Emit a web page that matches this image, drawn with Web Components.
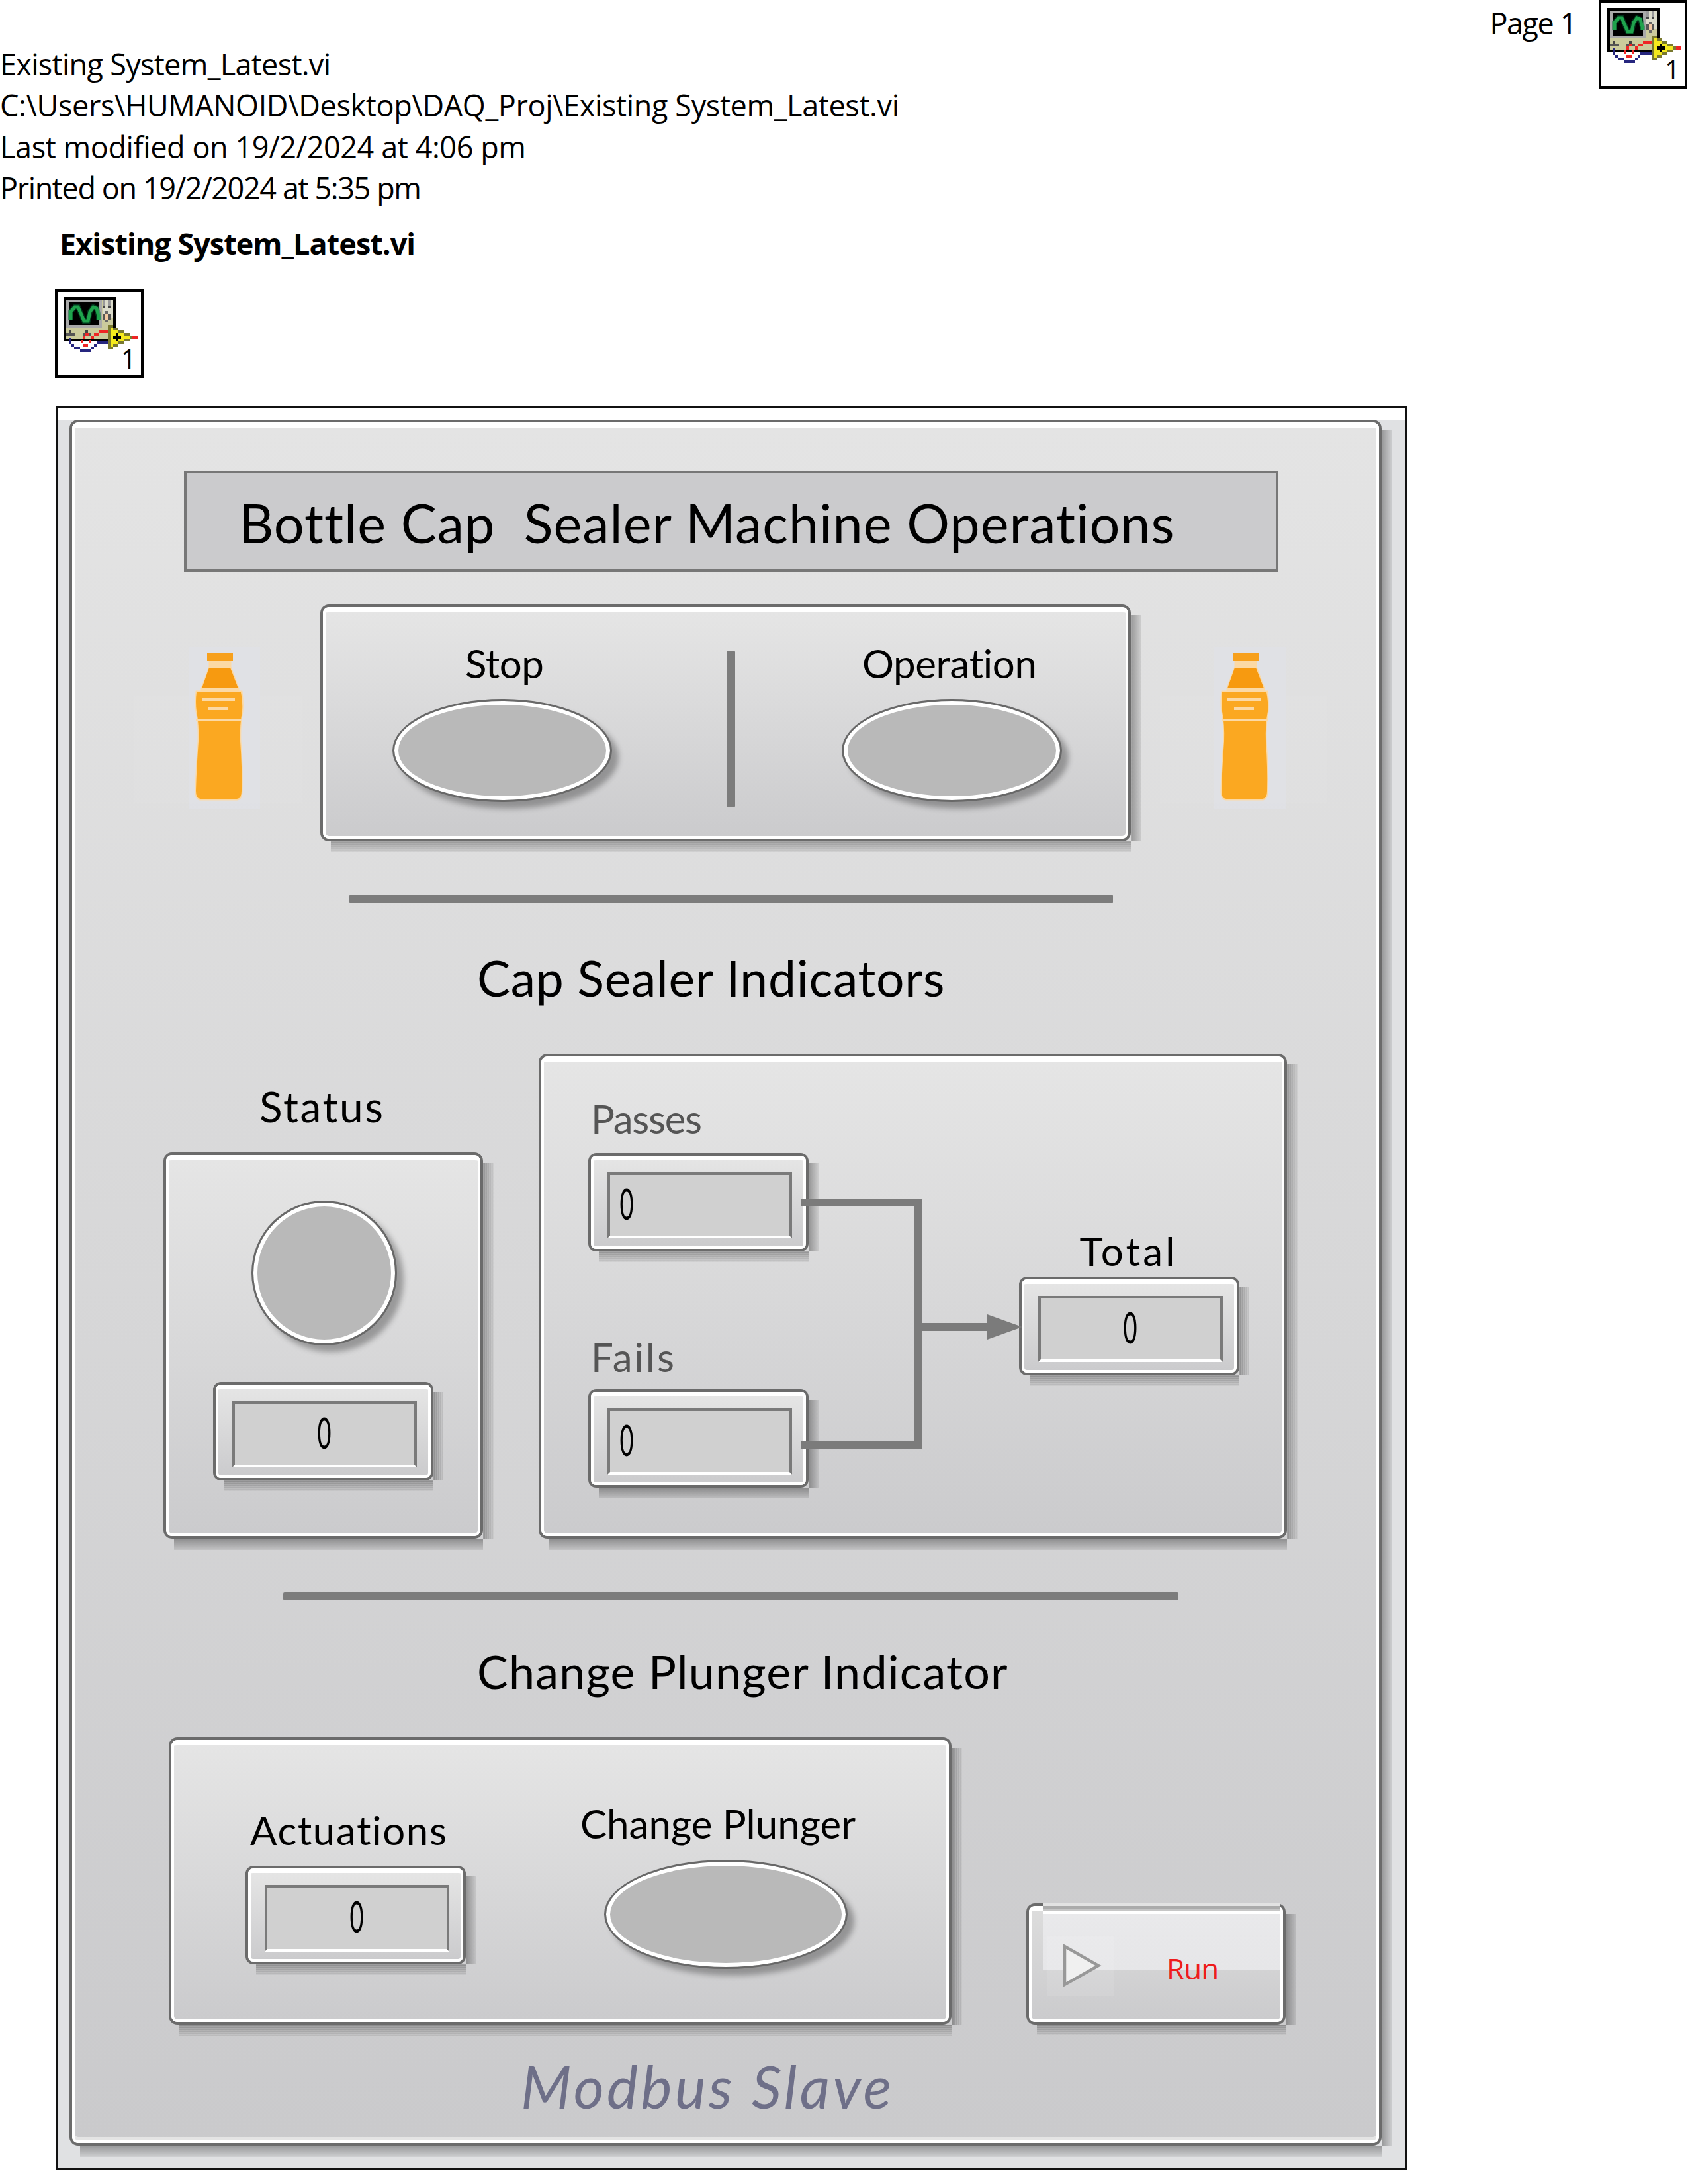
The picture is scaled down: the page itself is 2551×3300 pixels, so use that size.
<!DOCTYPE html>
<html><head><meta charset="utf-8"><title>Existing System_Latest.vi</title>
<style>
html,body{margin:0;padding:0;background:#fff}
body{width:2551px;height:3300px;overflow:hidden;font-family:"Open Sans","Noto Sans",sans-serif;color:#000}
</style></head><body>
<vi-head>
  <fit-text slot="lines" f="o" s="45" w="500">Existing System_Latest.vi</fit-text>
  <fit-text slot="lines" f="o" s="45" w="1359">C:\Users\HUMANOID\Desktop\DAQ_Proj\Existing System_Latest.vi</fit-text>
  <fit-text slot="lines" f="o" s="45" w="795">Last modified on 19/2/2024 at 4:06 pm</fit-text>
  <fit-text slot="lines" f="o" s="45" w="637">Printed on 19/2/2024 at 5:35 pm</fit-text>
  <fit-text slot="page" f="o" s="45" w="132">Page 1</fit-text>
</vi-head>
<fit-text f="o" s="45" wt="700" w="538" style="margin:21.5px 0 0 90px;line-height:62.4px">Existing System_Latest.vi</fit-text>
<vi-icon style="margin:37.5px 0 0 83px"></vi-icon>

<vi-frame>
  <lv-box foot wt="8" style="height:2608px;width:1983px">
    <lv-title style="margin:65px 0 0 165px">
      <fit-text s="81" w="1414" style="margin:34px 0 0 79px">Bottle Cap  Sealer Machine Operations</fit-text>
    </lv-title>

    <lv-row style="margin-top:49.5px">
      <lv-bottle style="margin:57px 0 0 160px"></lv-bottle>
      <lv-box style="margin-left:77px;width:1225px;height:357.5px">
        <lv-row style="padding-left:101px">
          <lv-col style="width:332px">
            <fit-text s="60" w="119" style="margin:47.3px 0 0 110px">Stop</fit-text>
            <lv-lamp style="margin-top:23.7px;width:332px;height:156px"></lv-lamp>
          </lv-col>
          <lv-rule style="margin:57.5px 0 0 173px;width:13px;height:237px"></lv-rule>
          <lv-col style="width:333px;margin-left:161px">
            <fit-text s="60" w="265" style="margin:47.3px 0 0 31px">Operation</fit-text>
            <lv-lamp style="margin-top:23.7px;width:333px;height:156px"></lv-lamp>
          </lv-col>
        </lv-row>
      </lv-box>
      <lv-bottle style="margin:57px 0 0 114px"></lv-bottle>
    </lv-row>

    <lv-rule style="margin:81px 0 0 415px;width:1154px;height:13px"></lv-rule>
    <fit-text s="75" w="708" style="margin:75px 0 0 608px">Cap Sealer Indicators</fit-text>

    <lv-row style="margin-top:77.4px;--align:flex-end">
      <lv-col style="margin-left:134px;width:483px">
        <fit-text s="64" w="187" style="margin:0 0 37.5px 145px">Status</fit-text>
        <lv-box style="height:583.5px">
          <lv-lamp style="margin:60.5px 0 0 125px;width:220px;height:219px"></lv-lamp>
          <lv-display align="c" value="0" style="margin:55px 0 0 67px"></lv-display>
        </lv-box>
      </lv-col>
      <lv-box style="margin-left:84px;width:1131px;height:733px">
        <lv-wired>
          <lv-col style="margin-left:67px;width:333px">
            <fit-text s="60" w="168" c="#555" style="margin:56px 0 22px 4px">Passes</fit-text>
            <lv-display align="l" value="0"></lv-display>
            <fit-text s="60" w="126" c="#555" style="margin:129px 0 18.6px 4px">Fails</fit-text>
            <lv-display align="l" value="0"></lv-display>
          </lv-col>
          <lv-col style="margin-left:317.5px;width:333px">
            <fit-text s="60" w="144" style="margin:256px 0 9px 92px">Total</fit-text>
            <lv-display align="c" value="0"></lv-display>
          </lv-col>
        </lv-wired>
      </lv-box>
    </lv-row>

    <lv-rule style="margin:81px 0 0 315px;width:1353px;height:12.5px"></lv-rule>
    <fit-text s="70" w="803" style="margin:71.5px 0 0 608px">Change Plunger Indicator</fit-text>

    <lv-row style="margin-top:65.5px;--align:flex-end">
      <lv-box style="margin-left:142px;width:1183px;height:433.6px">
        <lv-row style="--align:flex-start">
          <lv-col style="margin-left:108px;width:333px">
            <fit-text s="60" w="298" style="margin:98px 0 23.6px 7px">Actuations</fit-text>
            <lv-display align="c" value="0"></lv-display>
          </lv-col>
          <lv-col style="margin-left:209px;width:368px">
            <fit-text s="60" w="416" style="margin:88px 0 24.5px -36px">Change Plunger</fit-text>
            <lv-lamp style="width:368px;height:165px"></lv-lamp>
          </lv-col>
        </lv-row>
      </lv-box>
      <lv-run style="margin-left:113px"></lv-run>
    </lv-row>

    <fit-text s="89" w="560" i c="#6e6f88" style="margin:48.4px 0 0 674px">Modbus Slave</fit-text>
  </lv-box>
</vi-frame>

<script>
const el = (name, css, html) => {
  customElements.define(name, class extends HTMLElement {
    constructor(){ super(); this.attachShadow({mode:'open'}).innerHTML = `<style>${css}</style>${html}`; }
  });
};
const R = (x,y,w,h,c) => `<rect x="${x}" y="${y}" width="${w}" height="${h}" fill="${c}"/>`;
const SH = (w,h) => `
  .s{position:absolute;display:block}
  .r{left:calc(100% + 4px);top:12px;bottom:-4px;width:${w}px;
     background:repeating-linear-gradient(to right,rgba(255,255,255,.14) 0 1px,transparent 1px 3px),linear-gradient(to right,rgba(0,0,0,.33),rgba(0,0,0,.08))}
  .b{top:calc(100% + 4px);left:12px;right:-4px;height:${h}px;
     background:repeating-linear-gradient(to bottom,rgba(255,255,255,.14) 0 1px,transparent 1px 3px),linear-gradient(to bottom,rgba(0,0,0,.33),rgba(0,0,0,.08))}`;

el('vi-head', `
  :host{display:grid;grid-template-columns:1fr auto;align-items:start}
  .l{padding-top:66px;line-height:62.4px}
  .r{display:flex;align-items:flex-start;gap:34px;padding-right:1px}
  .p{padding-top:4px}
`, `<div class="l"><slot name="lines"></slot></div>
    <div class="r"><div class="p"><slot name="page"></slot></div><vi-icon></vi-icon></div>`);

const blue='#26267f', red='#ee2525', oli='#79792f', yel='#f5ea1d';
el('vi-icon', `
  :host{display:block;width:134px;height:134px}
  svg{display:block}
`, `<svg width="134" height="134" viewBox="0 0 134 134">
  <rect x="2" y="2" width="130" height="130" fill="#fff" stroke="#000" stroke-width="4"/>
  <g shape-rendering="crispEdges">
    ${R(13,12,79,67,'#000')}
    ${R(17,16,71,59,'#cbcb9c')}
    ${R(17,16,54,42,'#a9a9a9')}
    ${R(21,20,46,34,'#000')}
    ${R(72,16,16,28,'#dcdccb')}
    ${R(72,16,4,9,'#999')}${R(80,16,4,9,'#999')}
    ${R(72,25,4,4,'#444')}${R(80,25,4,4,'#444')}
    ${R(72,37,4,9,'#555')}${R(80,37,4,9,'#555')}
    ${R(76,33,4,4,'#666')}${R(76,46,4,4,'#666')}
    ${R(76,37,4,9,'#f3c9a2')}
    ${R(17,66,13,4,'#555')}${R(21,62,4,4,'#444')}
    ${R(42,66,13,4,'#555')}${R(46,62,4,4,'#444')}
  </g>
  <polyline points="24,46 24,34 30,27 35,27 41,41 44,48 50,48 53,34 58,27 63,29 66,41 66,46" fill="none" stroke="#063" stroke-width="8" stroke-opacity=".5"/>
  <polyline points="24,46 24,34 30,27 35,27 41,41 44,48 50,48 53,34 58,27 63,29 66,41 66,46" fill="none" stroke="#1fa34c" stroke-width="5"/>
  <g shape-rendering="crispEdges">
    ${R(21,73,4,10,blue)}${R(25,83,4,4,blue)}${R(29,87,9,4,blue)}${R(38,91,17,4,blue)}${R(55,87,4,4,blue)}${R(59,83,4,4,blue)}${R(63,79,17,4,blue)}
    ${R(39,76,3,5,red)}${R(42,83,8,4,red)}${R(51,76,3,6,red)}${R(42,70,4,5,red)}${R(46,66,5,4,red)}${R(55,70,4,5,red)}${R(59,66,8,4,red)}${R(67,62,13,4,red)}
    ${R(80,54,8,37,oli)}${R(88,58,8,29,oli)}${R(96,62,8,21,oli)}${R(104,66,9,13,oli)}${R(113,70,4,5,oli)}
    ${R(84,58,4,29,yel)}${R(88,62,8,21,yel)}${R(96,66,8,13,yel)}${R(104,70,9,5,yel)}
    ${R(92,66,4,13,'#000')}${R(88,70,12,5,'#000')}
    ${R(117,70,8,5,red)}
  </g>
  <text x="100" y="120" font-family="Open Sans" font-size="40" fill="#000">1</text>
</svg>`);

el('vi-frame', `
  :host{display:block;box-sizing:border-box;margin:41.5px 0 0 84px;width:2042px;height:2666px;border:3px solid #111;
    background:linear-gradient(#fff 18px,#e0e1e3 18px);padding:18px 0 0 18px}
`, `<slot></slot>`);

el('lv-box', `
  :host{display:block;position:relative;box-sizing:border-box;border:4px solid #6b6b6b;border-radius:13px;background:#fff}
  .f{box-sizing:border-box;height:100%;border:solid #fff;border-width:var(--wt,7px) 4px 4px;border-radius:9px;
     background:linear-gradient(#e5e5e5,#cbcbcd)}
  :host([foot]) .f{background:linear-gradient(#e4e4e4,#cacacc);box-shadow:inset 0 -5px 0 #e4e4e4}
  :host([wt="8"]){--wt:8px}
  ${SH(16,17)}
`, `<div class="f"><slot></slot></div><i class="s r"></i><i class="s b"></i>`);

el('lv-row', `:host{display:flex;align-items:var(--align,flex-start)}`, `<slot></slot>`);
el('lv-col', `:host{display:block;flex:none}`, `<slot></slot>`);
el('lv-rule', `:host{display:block;flex:none;background:#7c7c7c;border-radius:2px}`, ``);

el('lv-title', `
  :host{display:flow-root;box-sizing:border-box;width:1654px;height:153px;border:4px solid #777;background:#cbcbcd}
`, `<slot></slot>`);

el('lv-lamp', `
  :host{display:block;box-sizing:border-box;border:3px solid #686868;border-radius:50%;background:#b9b9b9;
    box-shadow:inset 0 0 0 6px #fff,10px 10px 9px rgba(0,0,0,.3)}
`, ``);

el('lv-bottle', `
  :host{display:block;position:relative;flex:none;width:134px;height:259px}
  .band{position:absolute;left:-70px;top:81px;width:253px;height:163px;background:rgba(255,255,255,.05)}
  svg{position:relative;display:block}
`, `<div class="band"></div><svg width="134" height="259" viewBox="0 0 134 259">
  <rect x="12" y="8" width="108" height="244" fill="#e0e1ea" opacity=".55"/>
  <path d="M44 29H75V38L87 70V75H92Q94 90 93 105 89 125 90 150 93 190 92 225 92 238 85 238H30Q23 238 23 225 24 190 27 150 28 125 24 105 22 90 24 75H32V70L44 38Z" fill="#fbd9a5" stroke="#fbd9a5" stroke-width="3"/>
  <rect x="40" y="17" width="39" height="12" fill="#f7a01c"/>
  <path d="M43 39H75L87 70H32Z" fill="#f79a10"/>
  <path d="M24 76H91Q94 90 93 105 89 125 90 150 93 190 92 225 92 237 85 237H30Q23 237 23 225 24 190 27 150 28 125 24 105 22 90 24 76Z" fill="#fba821"/>
  <rect x="32" y="85" width="50" height="4" fill="#fbd9a5"/>
  <rect x="42" y="99" width="30" height="4" fill="#fbd9a5"/>
  <rect x="23" y="117" width="70" height="3" fill="#fbd9a5"/>
</svg>`);

customElements.define('lv-display', class extends HTMLElement {
  constructor(){
    super();
    const root = this.attachShadow({mode:'open'});
    const left = this.getAttribute('align') === 'l';
    root.innerHTML = `<style>
      :host{display:block;position:relative;box-sizing:border-box;width:333px;height:149.4px;border:4px solid #6b6b6b;border-radius:12px;background:#fff}
      .f{box-sizing:border-box;height:100%;border:solid #fff;border-width:7px 4px 4px;border-radius:8px;background:linear-gradient(#e5e5e5,#cbcbcd);padding:18px 0 0 21px}
      .d{box-sizing:border-box;width:279px;height:100.5px;background:#d0d0d0;border:solid #7a7a7a;border-width:4px 4px 0;
         border-bottom:4px solid #fff;display:flex;align-items:center;justify-content:${left?'flex-start':'center'};padding-left:${left?'6px':'0'}}
      .z{display:inline-block;font:400 66px/1 Lato,sans-serif;transform:translateY(-3px) scaleX(.55);color:#000}
      ${SH(15,16)}
    </style><div class="f"><div class="d"><span class="z">${this.getAttribute('value')}</span></div></div><i class="s r"></i><i class="s b"></i>`;
  }
});

el('lv-wired', `
  :host{display:flex;position:relative;align-items:flex-start}
  svg{position:absolute;left:389px;top:207px;overflow:visible}
`, `<slot></slot><svg width="334" height="378" viewBox="0 0 334 378">
  <path d="M0 0H183V378H0V367H171V11H0Z" fill="#7b7b7b"/>
  <path d="M183 188H281V175L334 194 281 213V200H183Z" fill="#7b7b7b"/>
</svg>`);

el('lv-run', `
  :host{display:block;position:relative;flex:none;box-sizing:border-box;width:392px;height:183px;border:4px solid #6b6b6b;border-radius:13px;background:#fff}
  .f{box-sizing:border-box;height:100%;display:flex;align-items:flex-start;border:solid #fff;border-width:7px 4px 4px;border-radius:9px;background:linear-gradient(#dcdcdc,#cbcbcd)}
  .g{position:absolute;left:20.5px;right:5.5px;top:-4px;height:100px;
     background:linear-gradient(#e2e2e2 0 4px,#ababab 4px 8px,#c6c6c6 8px 12px,#fff 12px 16px,#e9e9eb 16px,#e6e6e8)}
  svg{position:relative;display:block;margin:34px 0 0 24px;flex:none}
  .t{position:relative;margin:64px 0 0 80px;font:400 44px/46px "Open Sans",sans-serif;letter-spacing:-1px;color:#ee1c1c}
  ${SH(16,16)}
`, `<div class="f"><div class="g"></div>
    <svg width="100" height="100" viewBox="0 0 100 100"><rect x="0" y="5" width="100" height="90" fill="#fff" opacity=".1"/><path d="M26 20L77 49 26 78Z" fill="#f0f0f0" stroke="#989898" stroke-width="4.5"/></svg>
    <div class="t">Run</div></div><i class="s r"></i><i class="s b"></i>`);

const ctx = document.createElement('canvas').getContext('2d');
customElements.define('fit-text', class extends HTMLElement {
  constructor(){ super(); this.attachShadow({mode:'open'}).innerHTML = `<style>:host{display:block;white-space:pre;line-height:1;flex:none}</style><slot></slot>`; }
  connectedCallback(){
    const s = +this.getAttribute('s');
    const open = this.getAttribute('f') === 'o';
    const fam = open ? '"Open Sans"' : 'Lato';
    const wt = this.getAttribute('wt') || '400';
    const it = this.hasAttribute('i') ? 'italic' : 'normal';
    const txt = this.textContent;
    this.style.font = `${it} ${wt} ${s}px ${fam},sans-serif`;
    this.style.lineHeight = open ? '62.4px' : '1';
    this.style.color = this.getAttribute('c') || '#000';
    ctx.font = `${it} ${wt} ${s}px ${fam}`;
    const nat = ctx.measureText(txt).width;
    this.style.letterSpacing = ((+this.getAttribute('w') - nat) / (txt.length - 1)).toFixed(3) + 'px';
  }
});
</script>
</body></html>
